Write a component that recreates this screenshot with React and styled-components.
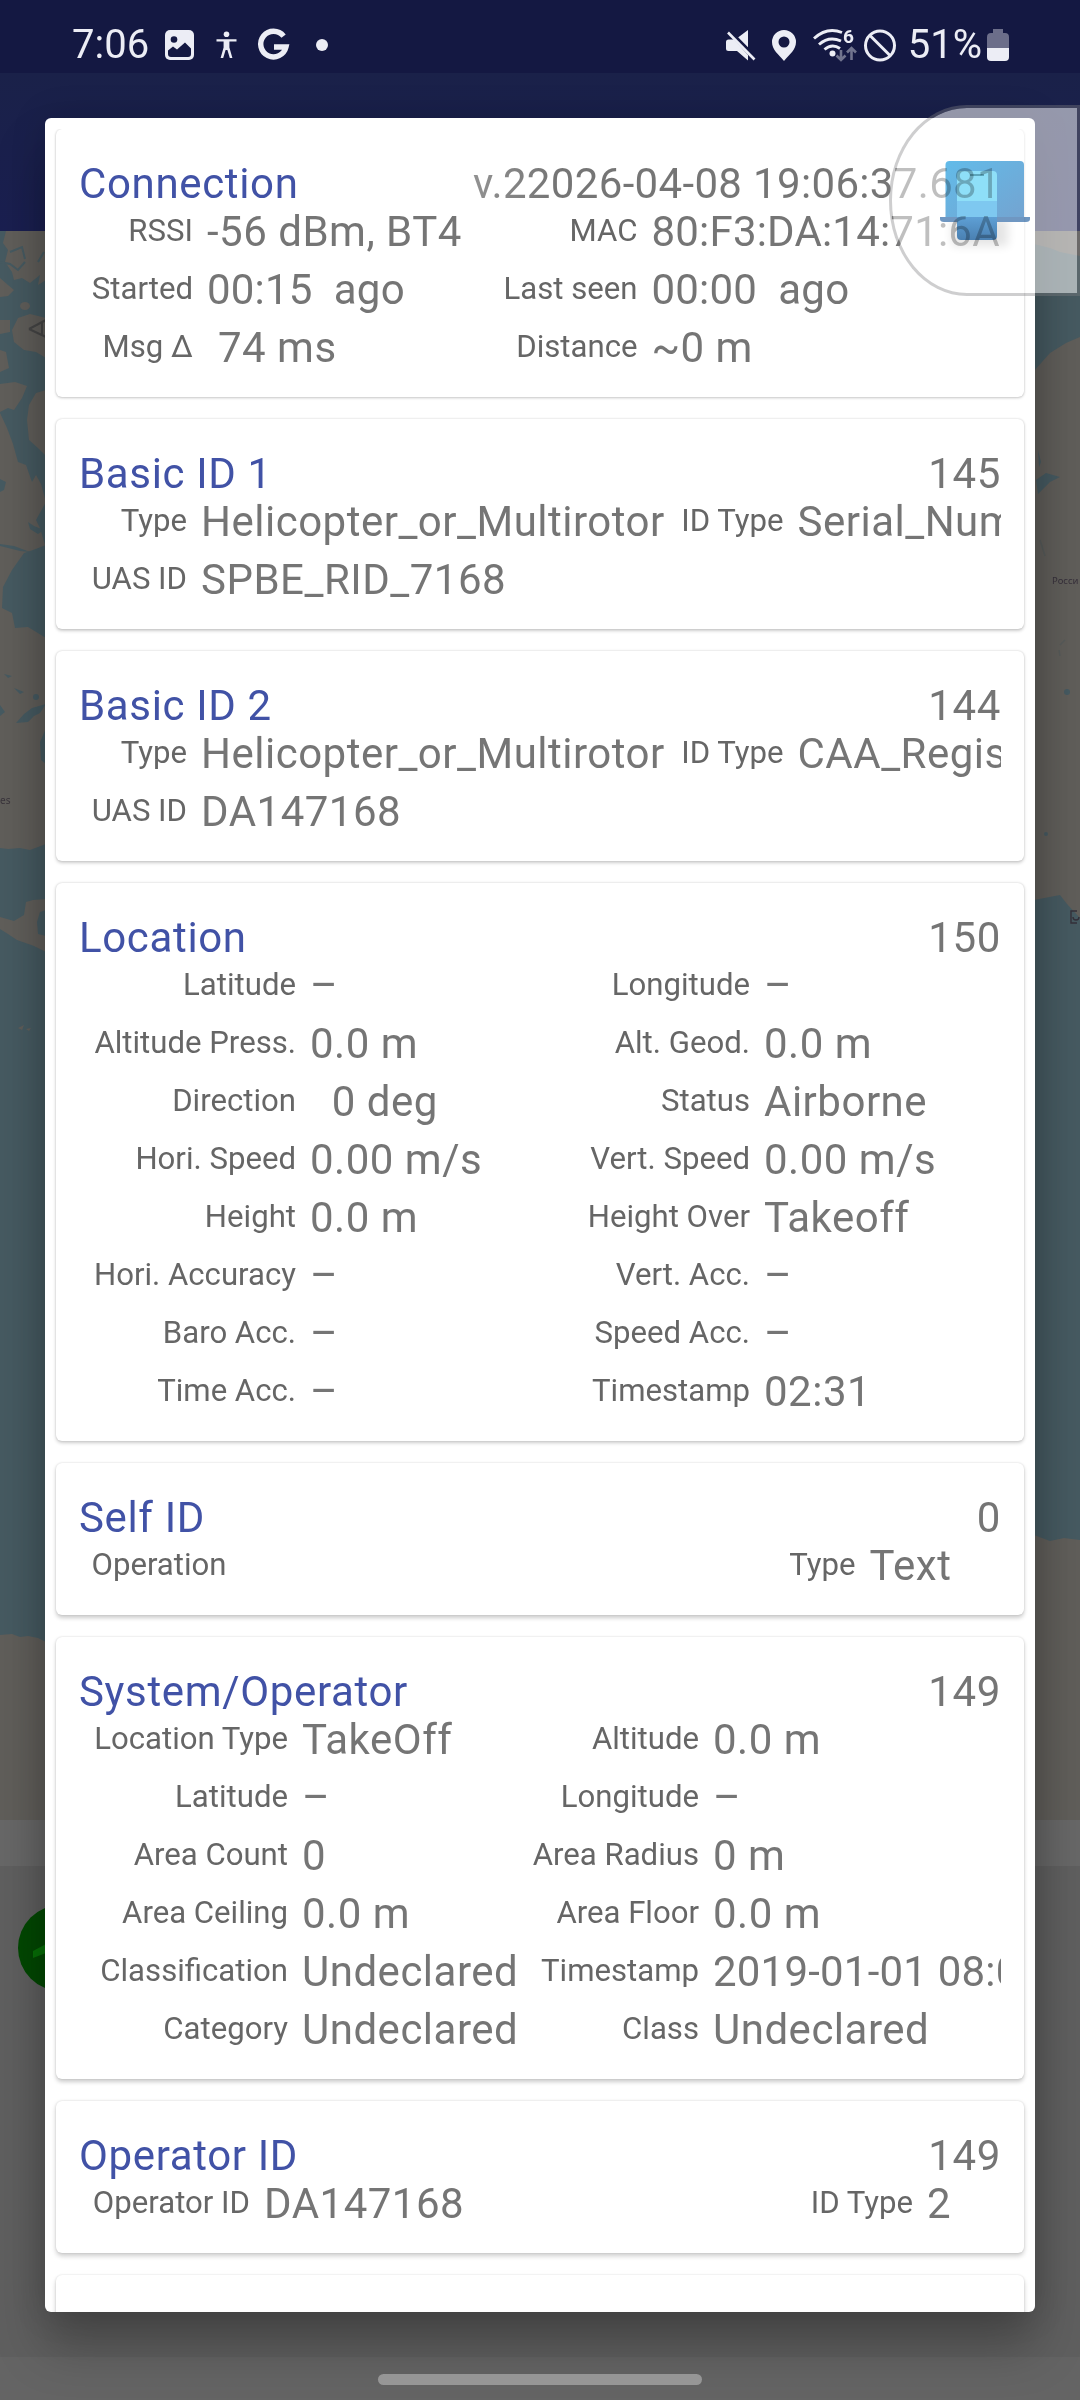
import React from "react";
import styled, { createGlobalStyle } from "styled-components";

const GlobalStyle = createGlobalStyle`
  * {
    box-sizing: border-box;
  }

  body {
    margin: 0;
    background: #5d5d5d;
    font-family: Roboto, "Noto Sans", sans-serif;
  }
`;

const Screen = styled.div`
  position: relative;
  width: 1080px;
  height: 2400px;
  overflow: hidden;
  display: flex;
  flex-direction: column;
`;

/* dimmed activity behind the dialog */
const Backdrop = styled.div`
  position: absolute;
  inset: 0;
  display: flex;
  flex-direction: column;
`;

const AppBar = styled.div`
  height: 231px;
  background: linear-gradient(#1a2149 73px, #1a1f50 231px);
`;

const MapArea = styled.svg`
  display: block;
  width: 1080px;
  height: 1589px;
`;

const ListHeader = styled.div`
  height: 46px;
  background: #676767;
`;

const DeviceList = styled.svg`
  display: block;
  width: 1080px;
  height: 491px;
  background: #5f5f5f;
`;

const NavStrip = styled.div`
  flex: 1;
  background: #646464;
`;

const StatusBar = styled.header`
  position: relative;
  height: 73px;
  flex: none;
  padding: 16px 71px 0 72px;
  display: flex;
  justify-content: space-between;
  align-items: flex-start;
  background: #141842;
  color: #ecedf5;
`;

const StatusGroup = styled.div`
  display: flex;
  align-items: center;
  height: 58px;
`;

const StatusText = styled.span`
  margin-left: ${(p) => p.$gap || 0}px;
  font-size: 40px;
  line-height: 58px;
`;

const StatusIcon = styled.svg`
  display: block;
  flex: none;
  margin-left: ${(p) => p.$gap || 0}px;
  overflow: visible;
`;

const Dialog = styled.main`
  position: relative;
  flex: none;
  height: 2194px;
  margin: 45px 45px 0;
  padding: 11px 11px 0;
  background: #fff;
  border-radius: 6px;
  box-shadow: 0 34px 50px rgba(0, 0, 0, 0.26), 0 0 36px rgba(0, 0, 0, 0.14);
`;

const CardList = styled.div`
  display: flex;
  flex-direction: column;
  gap: 22px;
  height: 2183px;
  margin: 0 -11px;
  padding: 0 11px;
  overflow: hidden;
  border-radius: 0 0 6px 6px;
`;

const CardBox = styled.section`
  flex: none;
  padding: 35px 23px 20px;
  background: #fff;
  border-radius: 6px;
  box-shadow: 0 ${(p) => p.$lift}px ${(p) => p.$lift + 2}px rgba(0, 0, 0, 0.2),
    0 0 2px rgba(0, 0, 0, 0.13);
`;

const CardHeader = styled.div`
  display: flex;
  justify-content: space-between;
  height: 39px;
  font-size: 42px;
  line-height: 39px;
  letter-spacing: 0.65px;
  white-space: nowrap;
`;

const Title = styled.h2`
  margin: 0;
  font-size: inherit;
  font-weight: 400;
  color: #4152a6;
`;

const Counter = styled.span`
  color: #757575;
`;

/* scrolled text, fades out towards its start */
const FadingCounter = styled(Counter)`
  letter-spacing: 0.34px;
  color: transparent;
  background: linear-gradient(90deg, #929292, #757575 80px);
  background-clip: text;
`;

const Fields = styled.div`
  display: grid;
  grid-template-columns: ${(p) => p.$columns};
  grid-auto-rows: 58px;
`;

const Label = styled.span`
  padding: 0 13.5px 3px 0;
  font-size: 31.15px;
  line-height: 55px;
  text-align: right;
  white-space: nowrap;
  color: #666;
`;

const Value = styled.span`
  padding-left: 0.5px;
  font-size: 42px;
  line-height: 58px;
  letter-spacing: ${(p) => (p.$tight ? "0.2px" : "0.5px")};
  white-space: pre;
  overflow: hidden;
  color: #757575;
`;

const NavBar = styled.footer`
  position: relative;
  flex: 1;
  display: flex;
  justify-content: center;
  padding-top: 62px;
`;

const HomeHandle = styled.div`
  width: 324px;
  height: 11px;
  border-radius: 6px;
  background: #969696;
`;

/* floating edge handle, lies over the dialog */
const EdgeHandle = styled.div`
  position: absolute;
  top: 105px;
  right: 0;
  width: 191px;
  height: 191px;
  border: 3px solid rgba(125, 125, 130, 0.38);
  border-radius: 78px 0 0 78px / 95px 0 0 95px;
  background: rgba(255, 255, 255, 0.54);
  background-clip: padding-box;
`;

const EdgeIcon = styled.svg`
  position: absolute;
  left: 42px;
  top: 43px;
  mix-blend-mode: multiply;
`;

const cards = [
  {
    title: "Connection",
    counter: "v.22026-04-08 19:06:37.681",
    fading: true,
    columns: "127.5px 254.5px 190px 1fr",
    fields: [
      ["RSSI", "-56 dBm, BT4"],
      ["MAC", "80:F3:DA:14:71:6A", true],
      ["Started", "00:15  ago", true],
      ["Last seen", "00:00  ago", true],
      ["Msg Δ", " 74 ms"],
      ["Distance", "~0 m"],
    ],
  },
  {
    title: "Basic ID 1",
    counter: "145",
    columns: "121.5px 471.5px 125px 1fr",
    fields: [
      ["Type", "Helicopter_or_Multirotor"],
      ["ID Type", "Serial_Number"],
      ["UAS ID", "SPBE_RID_7168"],
    ],
  },
  {
    title: "Basic ID 2",
    counter: "144",
    columns: "121.5px 471.5px 125px 1fr",
    fields: [
      ["Type", "Helicopter_or_Multirotor"],
      ["ID Type", "CAA_Registration"],
      ["UAS ID", "DA147168"],
    ],
  },
  {
    title: "Location",
    counter: "150",
    columns: "230.5px 264px 190px 1fr",
    fields: [
      ["Latitude", "–"],
      ["Longitude", "–"],
      ["Altitude Press.", "0.0 m"],
      ["Alt. Geod.", "0.0 m"],
      ["Direction", "  0 deg"],
      ["Status", "Airborne"],
      ["Hori. Speed", "0.00 m/s"],
      ["Vert. Speed", "0.00 m/s"],
      ["Height", "0.0 m"],
      ["Height Over", "Takeoff"],
      ["Hori. Accuracy", "–"],
      ["Vert. Acc.", "–"],
      ["Baro Acc.", "–"],
      ["Speed Acc.", "–"],
      ["Time Acc.", "–"],
      ["Timestamp", "02:31"],
    ],
  },
  {
    title: "Self ID",
    counter: "0",
    columns: "161px 439px 190px 1fr",
    fields: [
      ["Operation", ""],
      ["Type", "Text"],
    ],
  },
  {
    title: "System/Operator",
    counter: "149",
    columns: "222.5px 221px 190px 1fr",
    fields: [
      ["Location Type", "TakeOff"],
      ["Altitude", "0.0 m"],
      ["Latitude", "–"],
      ["Longitude", "–"],
      ["Area Count", "0"],
      ["Area Radius", "0 m"],
      ["Area Ceiling", "0.0 m"],
      ["Area Floor", "0.0 m"],
      ["Classification", "Undeclared"],
      ["Timestamp", "2019-01-01 08:00", true],
      ["Category", "Undeclared"],
      ["Class", "Undeclared"],
    ],
  },
  {
    title: "Operator ID",
    counter: "149",
    columns: "184.5px 473px 190px 1fr",
    fields: [
      ["Operator ID", "DA147168"],
      ["ID Type", "2"],
    ],
  },
  {
    title: "Authentication",
    counter: "",
    columns: "1fr",
    fields: [],
  },
];

function Card({ card, lift }) {
  const CounterText = card.fading ? FadingCounter : Counter;

  return (
    <CardBox $lift={lift}>
      <CardHeader>
        <Title>{card.title}</Title>
        <CounterText>{card.counter}</CounterText>
      </CardHeader>
      <Fields $columns={card.columns}>
        {card.fields.map(([label, value, tight]) => (
          <React.Fragment key={label}>
            <Label>{label}</Label>
            <Value $tight={tight}>{value}</Value>
          </React.Fragment>
        ))}
      </Fields>
    </CardBox>
  );
}

function WorldMap() {
  const water = "#465a61";
  const land = "#605e5a";
  return (
    <MapArea viewBox="0 231 1080 1589">
      <rect x="0" y="231" width="1080" height="1589" fill={land} />
      <g fill={water}>
        <path d="M0 231H6L3 243 8 250 5 262 12 272 14 280 22 278 30 283 40 275 38 285 46 280V548L40 528 36 520 46 502 41 484 36 475 32 482 26 465 18 462 13 444 7 428 0 413Z" />
        <path d="M46 545 33 550 24 553 12 570 3 587 2 608 12 613 15 628 28 627 46 638Z" />
        <path d="M0 479 6 482 4 490 0 492ZM16 723 24 714 32 708 46 704 40 713 34 716 28 722ZM46 728 40 742 41 760 46 764Z" />
        <circle cx="36" cy="697" r="3" />
        <path d="M0 848 8 849 20 848 30 850 46 844V1642L38 1638 28 1636 20 1637 12 1634 0 1635Z" />
        <path d="M28 522 34 526 44 530 38 534 30 529ZM0 544 14 546 30 552 20 551 0 546Z" />
        <path d="M4 674 12 676 8 678ZM14 688 24 692 20 694ZM0 705 5 712 0 716Z" />
        <path d="M1034 244 1050 248 1060 252 1080 256V337L1066 343 1050 353 1042 362 1034 371Z" />
        <path d="M1034 900 1060 895 1067 904 1080 918V1540L1064 1538 1050 1541 1034 1535Z" />
        <path d="M1036 480 1046 473 1060 477 1050 482 1038 494ZM1038 450 1041 462 1039 467Z" />
        <circle cx="1067" cy="692" r="3" />
        <circle cx="1046" cy="834" r="2" />
      </g>
      <g fill={land}>
        <path d="M0 278 8 285 14 290 8 296 0 297ZM0 320H10V332L0 334ZM0 350 6 352 9 368 0 372Z" />
        <path d="M0 384 15 382 27 386 22 398 14 410 8 408 0 412Z" />
        <path d="M18 318 30 314 46 318V358L36 352 24 350 14 342 12 330Z" />
        <path d="M46 390 36 393 29 405 27 420 29 440 38 448 46 456Z" />
        <ellipse cx="25" cy="306" rx="5" ry="4" />
        <path d="M26 902 33 900 46 899V910L40 912 37 922 38 934 46 936V952L34 946 17 940 8 934 0 929V917L14 921 24 915Z" />
        <path d="M18 1028 24 1025 22 1030ZM26 1029 31 1028 29 1031Z" />
      </g>
      <path
        d="M0 262 10 264 18 270 25 262M10 252 22 247 25 259M38 262 44 252"
        fill="none"
        stroke={water}
        strokeWidth="2"
      />
      <path
        d="M29 329 46 320M29 329 46 337M42 322V336"
        fill="none"
        stroke="#454545"
        strokeWidth="2"
      />
      <path
        d="M1040 540 1045 556M1060 645 1065 640M1059 650 1060 656"
        fill="none"
        stroke="#575b5a"
        strokeWidth="1.5"
      />
      <text x="0" y="804" fontFamily="Noto Sans" fontSize="10" fill="#39343b">
        es
      </text>
      <text x="1052" y="584" fontFamily="Noto Sans" fontSize="9.5" fill="#37313b">
        Росси
      </text>
      <path
        d="M1077 911H1071V923H1077M1073 917A3 3 0 0 0 1079 917"
        fill="none"
        stroke="#34303a"
        strokeWidth="1.4"
      />
    </MapArea>
  );
}

function NotificationIcons() {
  return (
    <>
      <StatusIcon $gap={16} width="29" height="30" viewBox="0 0 29 30">
        <rect width="29" height="30" rx="5" fill="currentColor" />
        <circle cx="9" cy="9.5" r="3.3" fill="#141842" />
        <path d="M3 24V20.5L8 16.5 12 19.5 20 12.5 26 18.5V24Q26 27 23 27H6Q3 27 3 24Z" fill="#141842" />
      </StatusIcon>
      <StatusIcon $gap={22} width="21" height="28" viewBox="0 0 21 28">
        <circle cx="10.5" cy="3.2" r="2.8" fill="currentColor" />
        <path
          d="M0.5 8.2H20.5V10.4H13.4V16.5L16.4 27H13.8L11.4 19H9.6L7.2 27H4.6L7.6 16.5V10.4H0.5Z"
          fill="currentColor"
        />
      </StatusIcon>
      <StatusIcon $gap={21} width="31" height="32" viewBox="0 0 31 32">
        <path
          d="M25.6 7.2A12.8 12.8 0 1 0 28 18H16"
          fill="none"
          stroke="currentColor"
          strokeWidth="5.4"
        />
      </StatusIcon>
      <StatusIcon $gap={27} width="12" height="12" viewBox="0 0 12 12">
        <circle cx="6" cy="6" r="6" fill="currentColor" />
      </StatusIcon>
    </>
  );
}

function SystemIcons() {
  return (
    <>
      <StatusIcon width="30" height="31" viewBox="0 0 30 31">
        <path d="M0 12Q0 9.5 2.5 9.5H8L22 25V30.5L11 21H2.5Q0 21 0 18.5Z" fill="currentColor" />
        <path d="M12 7.5 22 0V17.5Z" fill="currentColor" />
        <path d="M4.5 1.5 30 27.5" stroke="#141842" strokeWidth="2.5" />
        <path d="M2 2.5 28.5 29.5" stroke="currentColor" strokeWidth="2.6" />
      </StatusIcon>
      <StatusIcon $gap={16} width="24" height="31" viewBox="0 0 24 31">
        <path
          fillRule="evenodd"
          d="M12 0A12 12 0 0 0 0 12C0 20 6.5 24 12 31C17.5 24 24 20 24 12A12 12 0 0 0 12 0ZM12 6.5A5.5 5.5 0 1 1 12 17.5A5.5 5.5 0 0 1 12 6.5Z"
          fill="currentColor"
        />
      </StatusIcon>
      <StatusIcon $gap={17} width="44" height="32" viewBox="0 0 44 32">
        <g fill="none" stroke="currentColor" strokeWidth="2.9">
          <path d="M1 9.5Q14 -2.5 29 3.5" />
          <path d="M6 15.5Q16 6.5 28 12" />
          <path d="M11.5 20.5Q19 14 27 19.5" />
        </g>
        <circle cx="19.5" cy="24.5" r="3" fill="currentColor" />
        <text x="30" y="14" fontSize="19" fontWeight="700" fill="currentColor">
          6
        </text>
        <path
          d="M28 21V31M23.5 26.5 28 31 32.5 26.5M38.5 31V19M34 23.5 38.5 19 43 23.5"
          fill="none"
          stroke="#71748e"
          strokeWidth="2.6"
        />
      </StatusIcon>
      <StatusIcon $gap={7} width="32" height="33" viewBox="0 0 32 33">
        <circle cx="16" cy="16.5" r="14.5" fill="none" stroke="currentColor" strokeWidth="3" />
        <path d="M6 6.5 26 26.5" stroke="currentColor" strokeWidth="3" />
      </StatusIcon>
    </>
  );
}

function BatteryIcon() {
  return (
    <StatusIcon $gap={5} width="22" height="32" viewBox="0 0 22 32">
      <path d="M6 0H16V4H18Q22 4 22 8V19H0V8Q0 4 4 4H6Z" fill="#6c6e8a" />
      <path d="M0 19H22V28Q22 32 18 32H4Q0 32 0 28Z" fill="currentColor" />
    </StatusIcon>
  );
}

function LaptopPhoneIcon() {
  return (
    <EdgeIcon width="110" height="110" viewBox="934 151 110 110">
      <defs>
        <linearGradient id="screen" x1="0" y1="0" x2="1" y2="1">
          <stop offset="0" stopColor="#62bbe9" />
          <stop offset="1" stopColor="#74a3d0" />
        </linearGradient>
        <linearGradient id="phone" x1="0" y1="0" x2="0" y2="1">
          <stop offset="0.6" stopColor="#62a6dc" />
          <stop offset="1" stopColor="#4a80b2" />
        </linearGradient>
        <filter id="soft" x="-30%" y="-30%" width="160%" height="160%">
          <feGaussianBlur stdDeviation="5" />
        </filter>
      </defs>
      <rect x="952" y="218" width="56" height="28" fill="#000" opacity="0.1" filter="url(#soft)" />
      <rect x="945.5" y="161" width="78.5" height="60" rx="4" fill="url(#screen)" />
      <path d="M940 217H1030V219Q1030 222 1026 222H944Q940 222 940 219Z" fill="#6f97c2" />
      <rect x="957" y="171" width="40" height="69" rx="4" fill="url(#phone)" />
      <path d="M957 175Q957 171 961 171H993Q997 171 997 175V201H957Z" fill="#8edff8" />
      <path d="M957 201H997V217H957Z" fill="#7ec8f0" />
      <path d="M970 175H984" stroke="#5ba5bb" strokeWidth="2" />
    </EdgeIcon>
  );
}

export default function App() {
  return (
    <>
      <GlobalStyle />
      <Screen>
        <Backdrop>
          <AppBar />
          <WorldMap />
          <ListHeader />
          <DeviceList viewBox="0 1866 1080 491">
            <circle cx="61" cy="1948" r="43" fill="#034803" />
            <path d="M33 1951 46 1944V1953L33 1958Z" fill="#077007" />
          </DeviceList>
          <NavStrip />
        </Backdrop>

        <StatusBar>
          <StatusGroup>
            <StatusText>7:06</StatusText>
            <NotificationIcons />
          </StatusGroup>
          <StatusGroup>
            <SystemIcons />
            <StatusText $gap={12}>51%</StatusText>
            <BatteryIcon />
          </StatusGroup>
        </StatusBar>

        <Dialog>
          <CardList>
            {cards.map((card, i) => (
              <Card key={card.title} card={card} lift={1 + i * 0.3} />
            ))}
          </CardList>
        </Dialog>

        <NavBar>
          <HomeHandle />
        </NavBar>

        <EdgeHandle>
          <LaptopPhoneIcon />
        </EdgeHandle>
      </Screen>
    </>
  );
}
